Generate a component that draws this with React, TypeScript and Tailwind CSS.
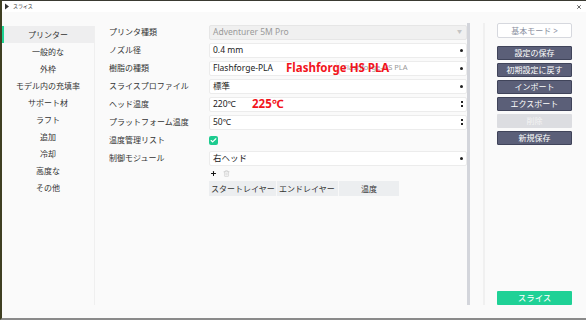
import { Check, Plus, Trash2, X } from 'lucide-react';

const menu = ['プリンター', '一般的な', '外枠', 'モデル内の充填率', 'サポート材', 'ラフト', '追加', '冷却', '高度な', 'その他'];

const actions = [
  { label: '設定の保存', disabled: false },
  { label: '初期設定に戻す', disabled: false },
  { label: 'インポート', disabled: false },
  { label: 'エクスポート', disabled: false },
  { label: '削除', disabled: true },
  { label: '新規保存', disabled: false },
];

function Caret() {
  return <span className="ml-auto mr-[3px] h-[3px] w-[3px] rounded-full bg-[#222]" />;
}

function Spin() {
  return (
    <span className="ml-auto mr-[3px] flex flex-col gap-[2px]">
      <span className="h-[2px] w-[2px] bg-[#222]" />
      <span className="h-[2px] w-[2px] bg-[#222]" />
    </span>
  );
}

function Field({ children, disabled = false, spin = false }: { children: React.ReactNode; disabled?: boolean; spin?: boolean }) {
  return (
    <div
      className={`flex h-[15px] w-[258px] items-center rounded-[2px] border pl-[3px] text-[8.5px] ${
        disabled ? 'border-[#e6e6e6] bg-[#f0f0f0] text-[#9a9a9a]' : 'border-[#ececec] bg-white text-[#222]'
      }`}
    >
      <span>{children}</span>
      {disabled ? <span className="ml-auto mr-[4px] text-[5px] text-[#c4c4c4]">▼</span> : spin ? <Spin /> : <Caret />}
    </div>
  );
}

function Row({ label, children }: { label: string; children: React.ReactNode }) {
  return (
    <div className="flex h-[18px] items-center">
      <span className="w-[100px] shrink-0 whitespace-nowrap text-[8px] text-[#333]">{label}</span>
      {children}
    </div>
  );
}

export default function App() {
  return (
    <main
      className="flex h-[320px] w-[586px] flex-col overflow-hidden border-t border-l-2 border-b-2 border-t-[#3a3a32] border-l-[#3f3f22] border-b-[#8a8a8a] bg-[#fafafa]"
      style={{ fontFamily: '"Noto Sans", "Noto Sans CJK JP", sans-serif' }}
    >
      <header className="flex h-[11px] items-center bg-white pl-[2px] pr-[4px]">
        <svg width="6" height="7" viewBox="0 0 6 7" className="mr-[3px]">
          <path d="M1 0.5 L5 3.5 L1 6.5 Z" fill="#333" />
        </svg>
        <span className="text-[5px] text-[#333]">スライス</span>
        <X className="ml-auto h-[6px] w-[6px] text-[#333]" strokeWidth={3} />
      </header>

      <div className="flex flex-1 pt-[14px] pb-[13px]">
        <aside className="flex w-[93px] shrink-0 flex-col border-r border-[#efefef]">
          {menu.map((m, i) => (
            <div
              key={m}
              className={`flex h-[17px] items-center justify-center whitespace-nowrap text-[8px] text-[#333] ${
                i === 0 ? 'border-l-2 border-[#1fd393] bg-[#eeeeef] pr-[2px]' : ''
              }`}
            >
              {m}
            </div>
          ))}
        </aside>

        <section className="relative -mt-[3px] flex w-[372px] shrink-0 flex-col pl-[14px]">
          <Row label="プリンタ種類">
            <Field disabled>Adventurer 5M Pro</Field>
          </Row>
          <Row label="ノズル径">
            <Field>0.4 mm</Field>
          </Row>
          <Row label="樹脂の種類">
            <div className="flex w-[258px] gap-[2px]">
              <div className="flex h-[15px] w-[128px] items-center rounded-[2px] border border-[#ececec] bg-white pl-[3px] text-[8.5px] text-[#222]">
                Flashforge-PLA
              </div>
              <div className="flex h-[15px] flex-1 items-center rounded-[2px] border border-[#ececec] bg-white pl-[3px] text-[7.5px] text-[#999]">
                <span>Flashforge-HS PLA</span>
                <Caret />
              </div>
            </div>
          </Row>
          <Row label="スライスプロファイル">
            <Field>標準</Field>
          </Row>
          <Row label="ヘッド温度">
            <Field spin>220℃</Field>
          </Row>
          <Row label="プラットフォーム温度">
            <Field spin>50℃</Field>
          </Row>
          <Row label="温度管理リスト">
            <span className="flex h-[9px] w-[9px] items-center justify-center rounded-[2px] bg-[#1dcb8f]">
              <Check className="h-[7px] w-[7px] text-white" strokeWidth={4} />
            </span>
          </Row>
          <Row label="制御モジュール">
            <Field>右ヘッド</Field>
          </Row>
          <div className="ml-[100px] flex h-[12px] items-center gap-[6px] pl-[1px]">
            <Plus className="h-[7px] w-[7px] text-[#111]" strokeWidth={3.5} />
            <Trash2 className="h-[7px] w-[7px] text-[#c8c8c8]" strokeWidth={2} />
          </div>
          <div className="ml-[100px] mt-[2px] flex h-[15px] w-[190px] bg-[#eceef0] text-[8px] text-[#333]">
            <span className="flex w-[68px] items-center whitespace-nowrap border-r border-[#f8f8f8] pl-[2px]">スタートレイヤー</span>
            <span className="flex w-[62px] items-center whitespace-nowrap border-r border-[#f8f8f8] pl-[2px]">エンドレイヤー</span>
            <span className="flex flex-1 items-center justify-center">温度</span>
          </div>

          <span className="absolute left-[191px] top-[39px] text-[11.5px] font-bold leading-none text-[#f2141c]">Flashforge HS PLA</span>
          <span className="absolute left-[157px] top-[75px] text-[11.5px] font-bold leading-none text-[#f2141c]">225℃</span>
        </section>

        <div className="-mt-[3px] w-[3px] shrink-0 bg-[#d3d5db]" />
        <div className="ml-[13px] -mt-[3px] w-[2px] shrink-0 bg-[#f0f0f0]" />

        <aside className="ml-[12px] flex w-[75px] shrink-0 flex-col">
          <button className="-mt-[3px] h-[15px] rounded-[2px] border border-[#d6d8de] bg-white text-[8px] text-[#8a8fa0]">基本モード &gt;</button>
          <div className="mt-[8px] flex flex-col gap-[3px]">
            {actions.map((a) => (
              <button
                key={a.label}
                className={`h-[14px] rounded-[1px] text-[8px] ${
                  a.disabled ? 'bg-[#dcdde1] text-[#f4f4f4]' : 'border border-[#40445a] bg-[#5b5f78] text-white'
                }`}
              >
                {a.label}
              </button>
            ))}
          </div>
          <button className="mt-auto h-[14px] rounded-[1px] bg-[#1fd196] text-[8.5px] text-white">スライス</button>
        </aside>
      </div>
    </main>
  );
}
